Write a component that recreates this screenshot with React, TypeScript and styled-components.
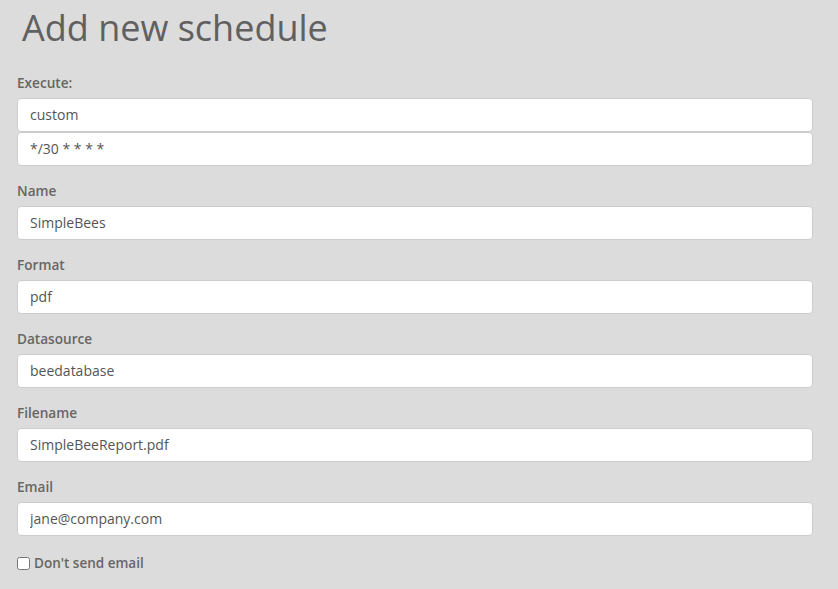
import React from "react";
import styled, { createGlobalStyle } from "styled-components";

const Global = createGlobalStyle`
  html, body { margin: 0; padding: 0; background: #dcdcdc; }
  body { font-family: "Open Sans", "Noto Sans", sans-serif; color: #666; }
  * { box-sizing: border-box; }
`;

const Page = styled.div`
  padding: 0 25px 20px 17px;
`;

const Title = styled.h1`
  margin: 0 0 21px 5px;
  padding-top: 4px;
  font-size: 36px;
  line-height: 48px;
  font-weight: 400;
  color: #606060;
`;

const Group = styled.div`
  margin-bottom: 15px;
`;

const Label = styled.label`
  display: block;
  font-size: 13.6px;
  line-height: 20px;
  font-weight: 600;
  color: #666;
  margin-bottom: 5px;
`;

const Input = styled.input`
  display: block;
  width: 100%;
  height: 34px;
  padding: 0 12px 2px;
  font-family: inherit;
  font-size: 14px;
  color: #555;
  background: #fff;
  border: 1px solid #ccc;
  border-radius: 4px;
  outline: none;
`;

const CheckRow = styled.label`
  display: flex;
  align-items: center;
  gap: 4px;
  padding-top: 2px;
  font-size: 13.5px;
  line-height: 20px;
  font-weight: 600;
  color: #666;
`;

const Check = styled.input`
  margin: 0;
  width: 13px;
  height: 13px;
`;

const fields: [string, string][] = [
  ["Name", "SimpleBees"],
  ["Format", "pdf"],
  ["Datasource", "beedatabase"],
  ["Filename", "SimpleBeeReport.pdf"],
  ["Email", "jane@company.com"],
];

export default function App() {
  return (
    <Page>
      <Global />
      <Title>Add new schedule</Title>
      <Group>
        <Label>Execute:</Label>
        <Input defaultValue="custom" readOnly />
        <Input defaultValue="*/30 * * * *" readOnly />
      </Group>
      {fields.map(([l, v]) => (
        <Group key={l}>
          <Label>{l}</Label>
          <Input defaultValue={v} readOnly />
        </Group>
      ))}
      <CheckRow>
        <Check type="checkbox" />
        Don't send email
      </CheckRow>
    </Page>
  );
}
